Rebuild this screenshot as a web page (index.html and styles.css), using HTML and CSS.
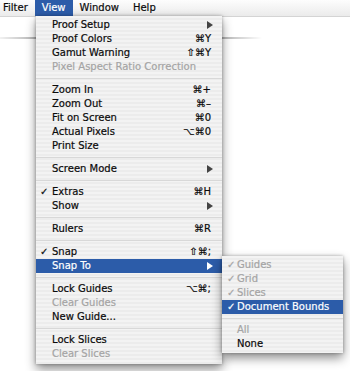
FILE: index.html
```html
<!DOCTYPE html>
<html lang="en">
<head>
    <meta charset="UTF-8">
    <meta name="viewport" content="width=device-width, initial-scale=1.0">
    <title>View Menu</title>
    <link rel="stylesheet" href="styles.css">
</head>
<body>
    <div class="menubar">
        <span class="menubar-item cut">Filter</span>
        <span class="menubar-item active">View</span>
        <span class="menubar-item">Window</span>
        <span class="menubar-item">Help</span>
    </div>
    <div class="window-edge"></div>

    <div class="menu main-menu">
        <div class="item"><span class="mark"></span><span class="label">Proof Setup</span><svg class="arrow" viewBox="0 0 6 8"><polygon points="0,0 6,4 0,8"/></svg></div>
        <div class="item"><span class="mark"></span><span class="label">Proof Colors</span><span class="keys">⌘Y</span></div>
        <div class="item"><span class="mark"></span><span class="label">Gamut Warning</span><span class="keys">⇧⌘Y</span></div>
        <div class="item disabled"><span class="mark"></span><span class="label">Pixel Aspect Ratio Correction</span></div>
        <div class="sep"></div>
        <div class="item"><span class="mark"></span><span class="label">Zoom In</span><span class="keys">⌘+</span></div>
        <div class="item"><span class="mark"></span><span class="label">Zoom Out</span><span class="keys">⌘–</span></div>
        <div class="item"><span class="mark"></span><span class="label">Fit on Screen</span><span class="keys">⌘0</span></div>
        <div class="item"><span class="mark"></span><span class="label">Actual Pixels</span><span class="keys">⌥⌘0</span></div>
        <div class="item"><span class="mark"></span><span class="label">Print Size</span></div>
        <div class="sep"></div>
        <div class="item"><span class="mark"></span><span class="label">Screen Mode</span><svg class="arrow" viewBox="0 0 6 8"><polygon points="0,0 6,4 0,8"/></svg></div>
        <div class="sep"></div>
        <div class="item"><span class="mark">✓</span><span class="label">Extras</span><span class="keys">⌘H</span></div>
        <div class="item"><span class="mark"></span><span class="label">Show</span><svg class="arrow" viewBox="0 0 6 8"><polygon points="0,0 6,4 0,8"/></svg></div>
        <div class="sep"></div>
        <div class="item"><span class="mark"></span><span class="label">Rulers</span><span class="keys">⌘R</span></div>
        <div class="sep"></div>
        <div class="item"><span class="mark">✓</span><span class="label">Snap</span><span class="keys">⇧⌘;</span></div>
        <div class="item selected"><span class="mark"></span><span class="label">Snap To</span><svg class="arrow" viewBox="0 0 6 8"><polygon points="0,0 6,4 0,8"/></svg></div>
        <div class="sep"></div>
        <div class="item"><span class="mark"></span><span class="label">Lock Guides</span><span class="keys">⌥⌘;</span></div>
        <div class="item disabled"><span class="mark"></span><span class="label">Clear Guides</span></div>
        <div class="item"><span class="mark"></span><span class="label">New Guide...</span></div>
        <div class="sep"></div>
        <div class="item"><span class="mark"></span><span class="label">Lock Slices</span></div>
        <div class="item disabled"><span class="mark"></span><span class="label">Clear Slices</span></div>
    </div>

    <div class="menu submenu">
        <div class="item disabled"><span class="mark">✓</span><span class="label">Guides</span></div>
        <div class="item disabled"><span class="mark">✓</span><span class="label">Grid</span></div>
        <div class="item disabled"><span class="mark">✓</span><span class="label">Slices</span></div>
        <div class="item selected"><span class="mark">✓</span><span class="label">Document Bounds</span></div>
        <div class="sep"></div>
        <div class="item disabled"><span class="mark"></span><span class="label">All</span></div>
        <div class="item"><span class="mark"></span><span class="label">None</span></div>
    </div>
</body>
</html>
```

FILE: styles.css
```css
:root {
    --highlight: #2c5ca9;
    --text: #0a0a0a;
    --disabled: #a4a4a4;
    --stripes: repeating-linear-gradient(#f3f3f3 0, #f3f3f3 2px, #ececec 2px, #ececec 4px);
}

* {
    margin: 0;
    padding: 0;
    box-sizing: border-box;
}

body {
    width: 350px;
    height: 371px;
    overflow: hidden;
    background: #fff;
    font-family: 'DejaVu Sans', Verdana, sans-serif;
    font-size: 10px;
    color: var(--text);
    -webkit-text-stroke: 0.2px currentColor;
    position: relative;
}

/* top menu bar */
.menubar {
    display: flex;
    height: 17px;
    background: linear-gradient(#fdfdfd, #ebebeb);
    border-bottom: 1px solid #d4d4d4;
}

.menubar-item {
    height: 16px;
    line-height: 16px;
    padding: 0 7px;
}

.menubar-item.cut {
    margin-left: -4px;
}

.menubar-item.active {
    background: var(--highlight);
    color: #fff;
}

.window-edge {
    margin-top: 20px;
    width: 270px;
    height: 2px;
    background: linear-gradient(to right, rgba(0,0,0,0.05), rgba(0,0,0,0.3) 36px, rgba(0,0,0,0.3) 222px, rgba(0,0,0,0) 262px);
    filter: blur(0.7px);
}

/* dropdown menus */
.menu {
    position: absolute;
    background: var(--stripes);
    box-shadow: 0 5px 10px rgba(0,0,0,0.45), 0 0 3px rgba(0,0,0,0.3);
}

.main-menu {
    left: 36px;
    top: 16px;
    width: 186px;
    padding: 2px 0 3px;
}

.submenu {
    left: 222px;
    top: 256px;
    width: 121px;
    padding: 2px 0 2px;
}

.item {
    display: flex;
    align-items: center;
    height: 14px;
    line-height: 14px;
    padding: 0 9px 0 4px;
    white-space: nowrap;
}

.mark {
    width: 12px;
    flex: none;
}

.label {
    flex: 1;
}

.keys {
    margin-right: 2px;
}

.arrow {
    width: 6px;
    height: 8px;
    fill: #444;
}

.item.disabled {
    color: var(--disabled);
}

.item.selected {
    background: var(--highlight);
    color: #fff;
}

.item.selected .arrow {
    fill: #fff;
}

.submenu .item {
    padding-left: 5px;
}

.submenu .mark {
    width: 10px;
}

.sep {
    height: 9px;
    display: flex;
    align-items: center;
}

.sep::after {
    content: "";
    flex: 1;
    height: 1px;
    background: #d8d8d8;
}
```
